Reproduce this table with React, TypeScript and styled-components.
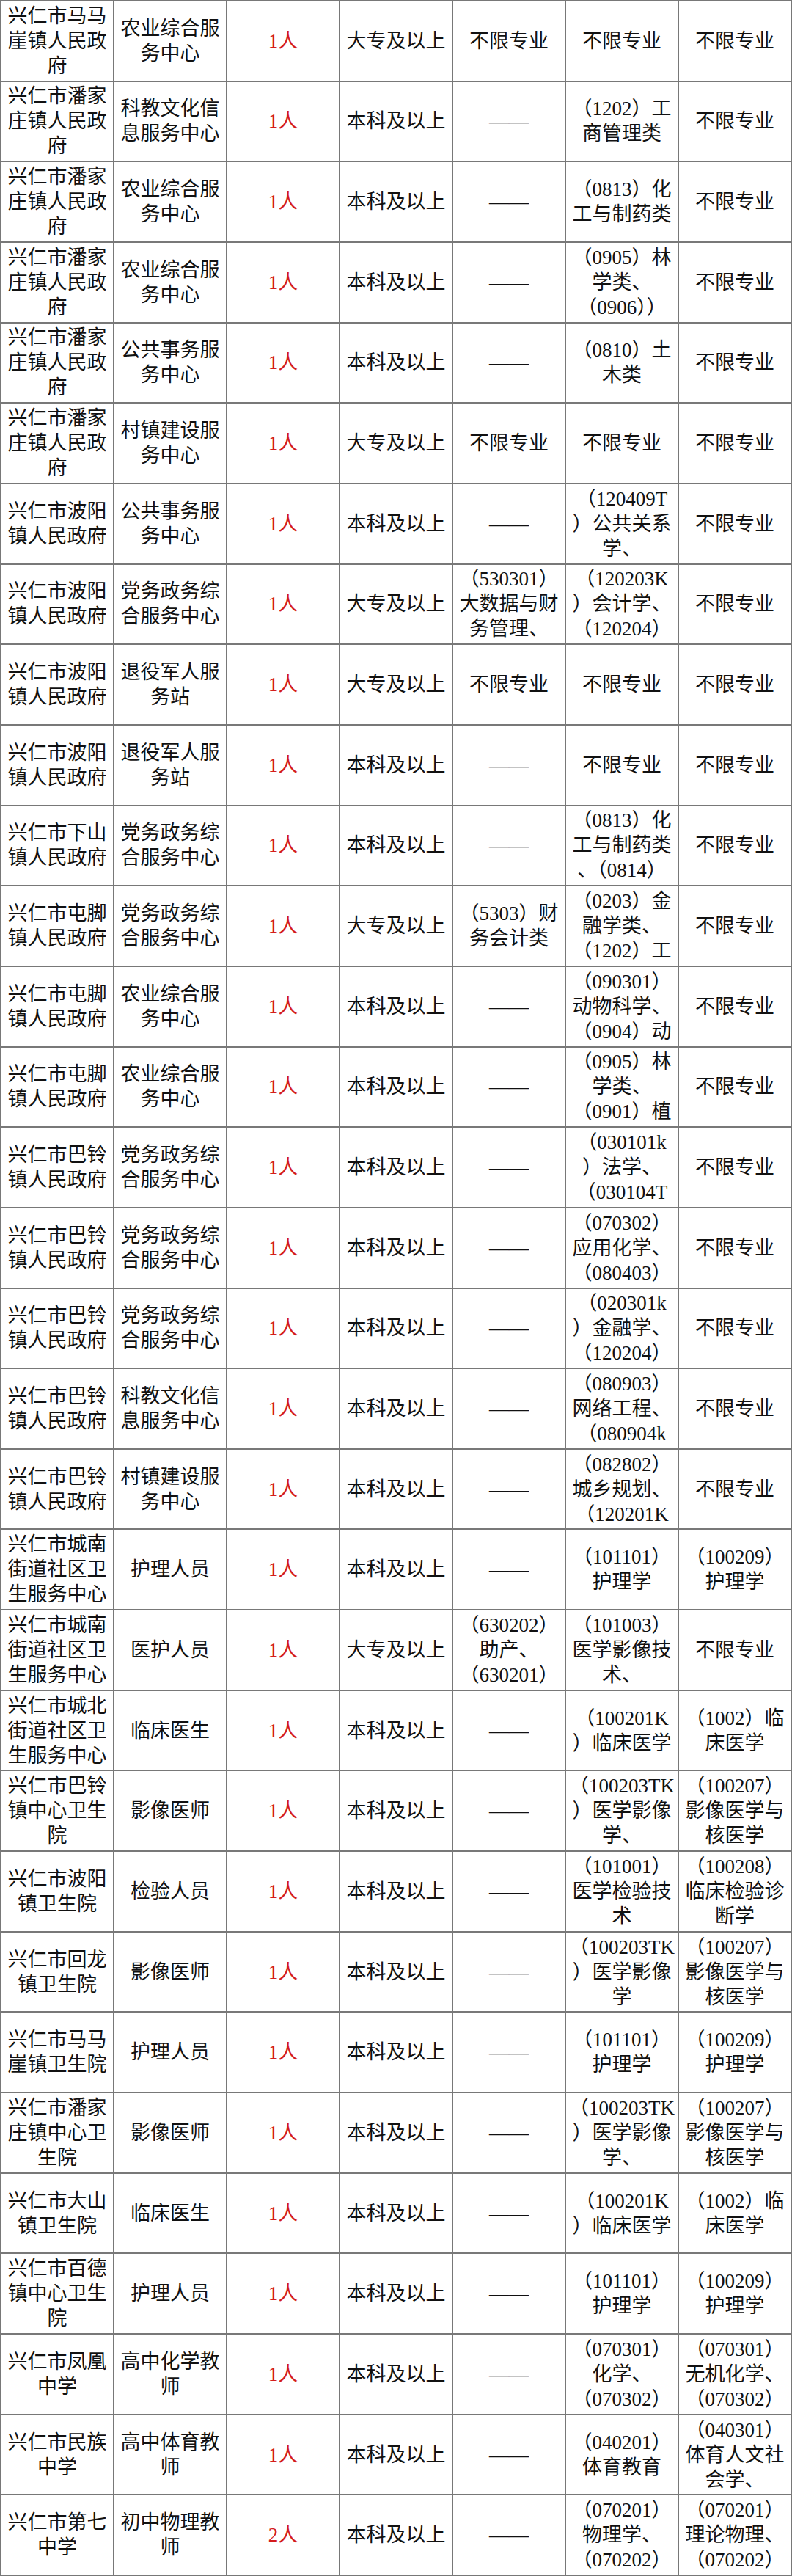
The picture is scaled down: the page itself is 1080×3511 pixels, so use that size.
import styled, { createGlobalStyle } from "styled-components";

const GlobalStyle = createGlobalStyle`
	html, body {
		margin: 0;
		padding: 0;
		background: #fff;
	}
	* {
		box-sizing: border-box;
	}
`;

const Table = styled.div`
	width: 1080px;
	height: 3511px;
	display: flex;
	flex-direction: column;
	border-top: 2px solid #787878;
	border-left: 2px solid #787878;
	background: #fff;
`;

const Row = styled.div`
	flex: 1;
	display: grid;
	grid-template-columns: repeat(7, 1fr);
`;

const Cell = styled.div<{ $red?: boolean }>`
	display: flex;
	align-items: center;
	justify-content: center;
	text-align: center;
	white-space: pre;
	border-right: 2px solid #787878;
	border-bottom: 2px solid #787878;
	font-family: "Liberation Serif", "Noto Sans CJK SC", serif;
	font-size: 27px;
	line-height: 34px;
	color: ${props => (props.$red ? "#d41c1c" : "#111")};
	overflow: visible;
`;

const D = "——";
const NL = "不限专业";
const BK = "本科及以上";
const DZ = "大专及以上";
const NM = "农业综合服\n务中心";
const DW = "党务政务综\n合服务中心";

const PJZ = "兴仁市潘家\n庄镇人民政\n府";
const BY = "兴仁市波阳\n镇人民政府";
const TJ = "兴仁市屯脚\n镇人民政府";
const BL = "兴仁市巴铃\n镇人民政府";

const rows: string[][] = [
	["兴仁市马马\n崖镇人民政\n府", NM, "1人", DZ, NL, NL, NL],
	[PJZ, "科教文化信\n息服务中心", "1人", BK, D, "（1202）工\n商管理类", NL],
	[PJZ, NM, "1人", BK, D, "（0813）化\n工与制药类", NL],
	[PJZ, NM, "1人", BK, D, "（0905）林\n学类、\n（0906））", NL],
	[PJZ, "公共事务服\n务中心", "1人", BK, D, "（0810）土\n木类", NL],
	[PJZ, "村镇建设服\n务中心", "1人", DZ, NL, NL, NL],
	[BY, "公共事务服\n务中心", "1人", BK, D, "（120409T\n）公共关系\n学、", NL],
	[BY, DW, "1人", DZ, "（530301）\n大数据与财\n务管理、", "（120203K\n）会计学、\n（120204）", NL],
	[BY, "退役军人服\n务站", "1人", DZ, NL, NL, NL],
	[BY, "退役军人服\n务站", "1人", BK, D, NL, NL],
	["兴仁市下山\n镇人民政府", DW, "1人", BK, D, "（0813）化\n工与制药类\n、（0814）", NL],
	[TJ, DW, "1人", DZ, "（5303）财\n务会计类", "（0203）金\n融学类、\n（1202）工", NL],
	[TJ, NM, "1人", BK, D, "（090301）\n动物科学、\n（0904）动", NL],
	[TJ, NM, "1人", BK, D, "（0905）林\n学类、\n（0901）植", NL],
	[BL, DW, "1人", BK, D, "（030101k\n）法学、\n（030104T", NL],
	[BL, DW, "1人", BK, D, "（070302）\n应用化学、\n（080403）", NL],
	[BL, DW, "1人", BK, D, "（020301k\n）金融学、\n（120204）", NL],
	[BL, "科教文化信\n息服务中心", "1人", BK, D, "（080903）\n网络工程、\n（080904k", NL],
	[BL, "村镇建设服\n务中心", "1人", BK, D, "（082802）\n城乡规划、\n（120201K", NL],
	["兴仁市城南\n街道社区卫\n生服务中心", "护理人员", "1人", BK, D, "（101101）\n护理学", "（100209）\n护理学"],
	["兴仁市城南\n街道社区卫\n生服务中心", "医护人员", "1人", DZ, "（630202）\n助产、\n（630201）", "（101003）\n医学影像技\n术、", NL],
	["兴仁市城北\n街道社区卫\n生服务中心", "临床医生", "1人", BK, D, "（100201K\n）临床医学", "（1002）临\n床医学"],
	["兴仁市巴铃\n镇中心卫生\n院", "影像医师", "1人", BK, D, "（100203TK\n）医学影像\n学、", "（100207）\n影像医学与\n核医学"],
	["兴仁市波阳\n镇卫生院", "检验人员", "1人", BK, D, "（101001）\n医学检验技\n术", "（100208）\n临床检验诊\n断学"],
	["兴仁市回龙\n镇卫生院", "影像医师", "1人", BK, D, "（100203TK\n）医学影像\n学", "（100207）\n影像医学与\n核医学"],
	["兴仁市马马\n崖镇卫生院", "护理人员", "1人", BK, D, "（101101）\n护理学", "（100209）\n护理学"],
	["兴仁市潘家\n庄镇中心卫\n生院", "影像医师", "1人", BK, D, "（100203TK\n）医学影像\n学、", "（100207）\n影像医学与\n核医学"],
	["兴仁市大山\n镇卫生院", "临床医生", "1人", BK, D, "（100201K\n）临床医学", "（1002）临\n床医学"],
	["兴仁市百德\n镇中心卫生\n院", "护理人员", "1人", BK, D, "（101101）\n护理学", "（100209）\n护理学"],
	["兴仁市凤凰\n中学", "高中化学教\n师", "1人", BK, D, "（070301）\n化学、\n（070302）", "（070301）\n无机化学、\n（070302）"],
	["兴仁市民族\n中学", "高中体育教\n师", "1人", BK, D, "（040201）\n体育教育", "（040301）\n体育人文社\n会学、"],
	["兴仁市第七\n中学", "初中物理教\n师", "2人", BK, D, "（070201）\n物理学、\n（070202）", "（070201）\n理论物理、\n（070202）"],
];

function App() {
	return (
		<>
			<GlobalStyle />
			<Table>
				{rows.map((row, i) => (
					<Row key={i}>
						{row.map((text, j) => (
							<Cell key={j} $red={j === 2}>
								{text}
							</Cell>
						))}
					</Row>
				))}
			</Table>
		</>
	);
}

export default App;
